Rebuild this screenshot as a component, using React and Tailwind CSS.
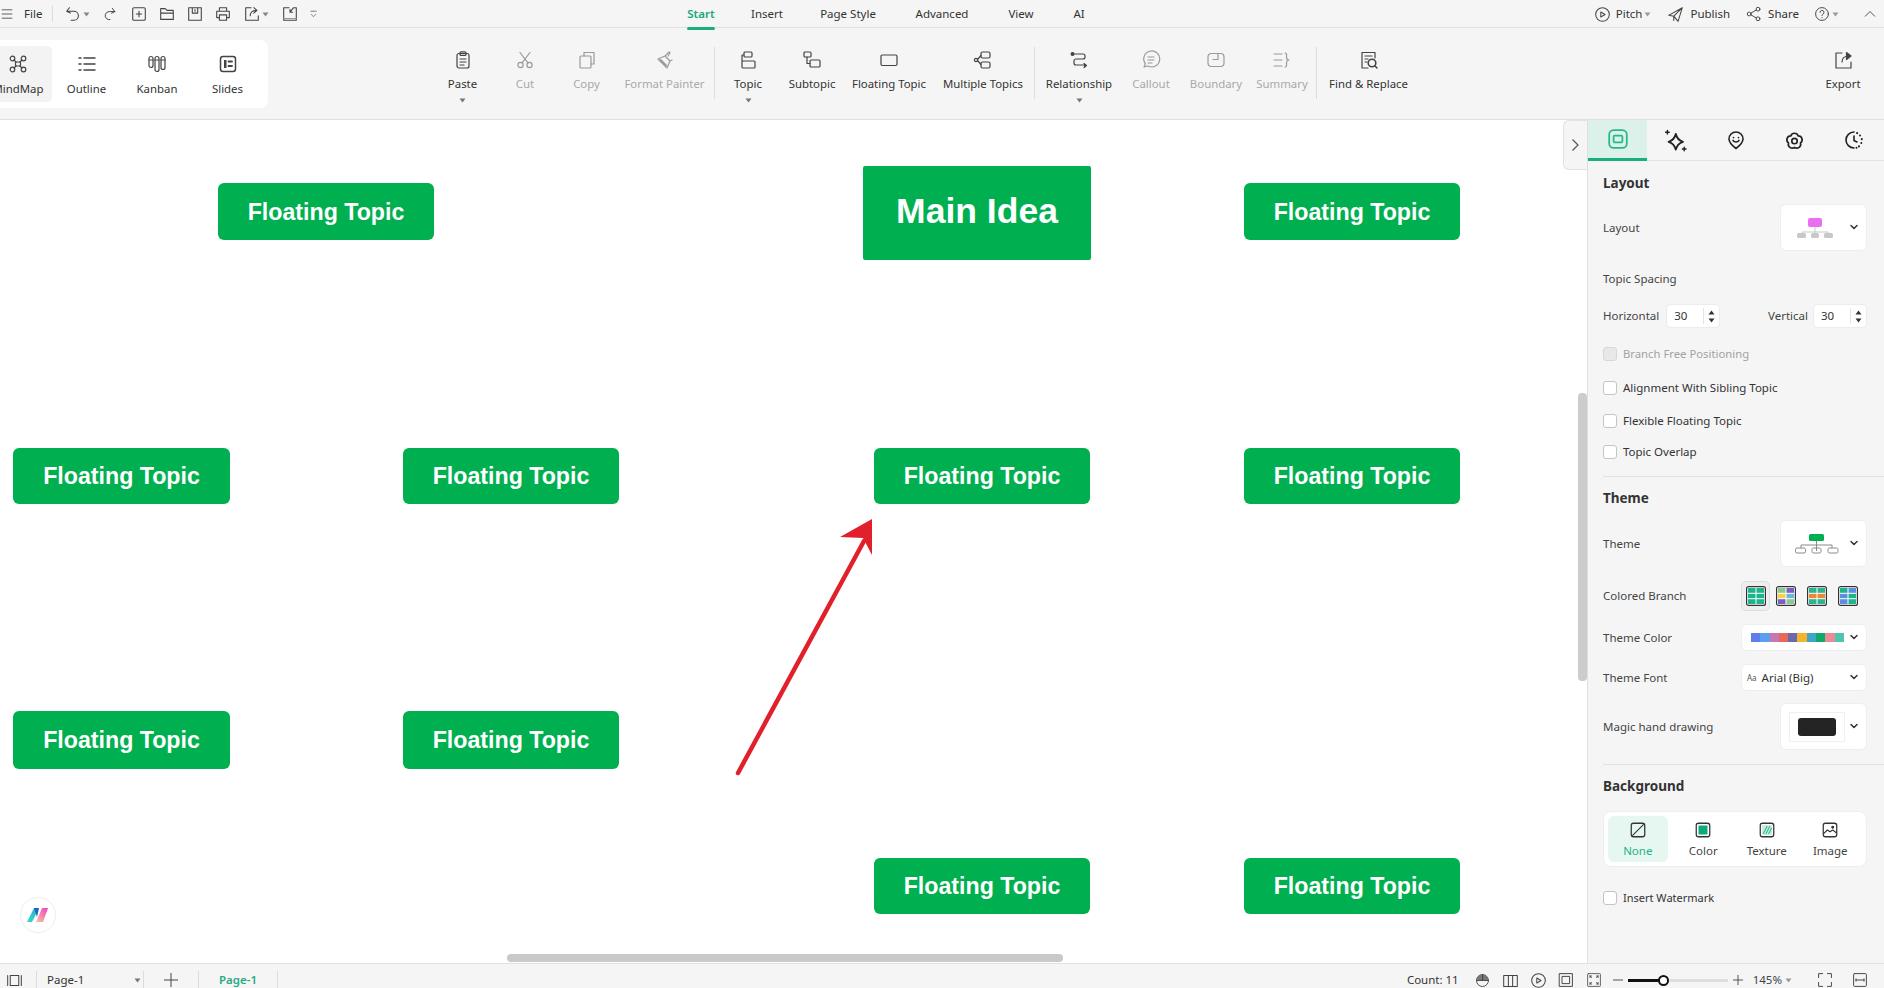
import React from "react";

const S = ({ w = 20, h, vb = "0 0 20 20", className = "", sw = 1.2, children }) => (
  <svg width={w} height={h || w} viewBox={vb} fill="none" stroke="currentColor" strokeWidth={sw} strokeLinecap="round" strokeLinejoin="round" className={className}>
    {children}
  </svg>
);

const Caret = ({ className = "" }) => (
  <svg width="7" height="5" viewBox="0 0 7 5" className={className}>
    <path d="M0.5 0.5h6L3.5 4.5z" fill="currentColor" />
  </svg>
);

const Chevron = () => (
  <svg width="10" height="7" viewBox="0 0 10 7" fill="none" stroke="#333" strokeWidth="1.5" strokeLinecap="round" strokeLinejoin="round">
    <path d="M2 1.5L5 4.5L8 1.5" />
  </svg>
);

// top bar icons
const IconMenu = () => <S w={14}><path d="M3 4h14M3 10h14M3 16h14" /></S>;
const IconUndo = () => <S w={18}><path d="M6 3L3 7l4 2M3 7h8a5 5 0 0 1 0 10H8" /></S>;
const IconRedo = () => <S w={16}><path d="M13 3l3 4-4 2M16 7H9a5 5 0 0 0-3 9 5 5 0 0 0 4 1" /></S>;
const IconNew = () => <S w={18}><rect x="3" y="3" width="14" height="14" rx="1.5" /><path d="M10 7v6M7 10h6" /></S>;
const IconOpen = () => <S w={18}><path d="M3 16V4h5l2 2h7v10zM3 9h14" /></S>;
const IconSave = () => <S w={18}><path d="M3 3h14v14H3zM7 3v6h6V3M10 5v2" /></S>;
const IconPrint = () => <S w={18}><path d="M6 7V3h8v4M5 14H3V7h14v7h-2M6 11h8v6H6z" /></S>;
const IconExport = () => <S w={18}><path d="M9 3H3v14h14v-5M8 12c0-4 3-6 7-6M12 3l3.5 3L12 9" /></S>;
const IconCheckin = () => <S w={18}><path d="M9 3H3v14h14V3h-2M14 3l-4 5M10 5v3h3" /><path d="M3 15h14" stroke="#999" /></S>;
const IconMore = () => <S w={11}><path d="M5 4h10M6 10l4 4 4-4" /></S>;
const IconPitch = () => <S w={17}><circle cx="10" cy="10" r="8" /><path d="M8 7l5 3-5 3z" /></S>;
const IconPublish = () => <S w={17}><path d="M18 2L2 11l6 1zM18 2L13 18l-5-6M18 2L8 12v5" /></S>;
const IconShare = () => <S w={16}><circle cx="4" cy="10" r="2.4" /><circle cx="15" cy="4" r="2.4" /><circle cx="15" cy="16" r="2.4" /><path d="M6 9l7-4M6 11l7 4" /></S>;
const IconHelp = () => (
  <S w={16}>
    <circle cx="10" cy="10" r="8" />
    <path d="M7.5 8a2.5 2.5 0 1 1 3.5 2.3c-.7.3-1 .8-1 1.7M10 14.5v.2" />
  </S>
);

// view switch icons
const IconMind = () => (
  <S w={20}>
    <circle cx="4.5" cy="4.5" r="2.3" /><circle cx="15.5" cy="4.5" r="2.3" /><circle cx="4.5" cy="15.5" r="2.3" /><circle cx="15.5" cy="15.5" r="2.3" />
    <rect x="7.5" y="8" width="5" height="4" rx="1" /><path d="M6 6l2 2M14 6l-2 2M6 14l2-2M14 14l-2-2" />
  </S>
);
const IconOutline = () => <S w={20} sw={1.5}><path d="M2 4h2M7 4h11M2 10h2M7 10h11M2 16h2M7 16h11" /></S>;
const IconKanban = () => (
  <S w={20}>
    <rect x="2" y="2.5" width="4" height="11" rx="2" /><rect x="8" y="2.5" width="4" height="15" rx="2" /><rect x="14" y="2.5" width="4" height="13" rx="2" />
    <path d="M2 6h4M8 6h4M14 6h4" />
  </S>
);
const IconSlides = () => (
  <S w={20}>
    <rect x="2.5" y="2.5" width="15" height="15" rx="2.5" strokeWidth="1.5" />
    <rect x="6" y="6" width="2.5" height="8" fill="currentColor" stroke="none" />
    <path d="M10.5 7.5h3.5M10.5 12h3.5" strokeWidth="1.8" />
  </S>
);

// ribbon icons
const IconPaste = () => <S w={20}><rect x="4" y="3.5" width="12" height="14.5" rx="2" /><rect x="7" y="1.8" width="6" height="3.6" rx="1" /><path d="M7 9h6M7 12h6M7 15h4" /></S>;
const IconCut = () => <S w={20}><circle cx="5.5" cy="15" r="2.6" /><circle cx="14.5" cy="15" r="2.6" /><path d="M7 12.8L15 2.5M13 12.8L5 2.5" /></S>;
const IconCopy = () => <S w={20}><rect x="3" y="6" width="11" height="12" rx="1" /><path d="M7 6V2.5h10V14h-3" /></S>;
const IconPainter = () => <S w={20}><path d="M3 9l7-3 5 5-3 7zM10 6l4-4 1 1-2 3M15 11l2-1" /><path d="M6 9l6 6-1 2-7-7z" fill="currentColor" stroke="none" /></S>;
const IconTopic = () => <S w={20}><rect x="6" y="2" width="8" height="5" rx="1" /><rect x="4" y="11" width="13" height="7" rx="1" /><path d="M4 11V5h2" /></S>;
const IconSubtopic = () => <S w={20}><rect x="2" y="2" width="7" height="5" rx="1" /><rect x="8" y="10" width="10" height="7" rx="1" /><path d="M5 7v6.5h3" /></S>;
const IconFloating = () => <S w={20}><rect x="2" y="5" width="16" height="10.5" rx="1.2" /></S>;
const IconMultiple = () => <S w={20}><rect x="8" y="2" width="9" height="6" rx="1.5" /><rect x="8" y="12" width="9" height="6" rx="1.5" /><circle cx="3" cy="10" r="1.6" /><path d="M4.5 9.5L8 5.5M4.5 10.5L8 14.5" /></S>;
const IconRelation = () => <S w={20}><path d="M4 4h10a2 2 0 0 1 2 2v1a2 2 0 0 1-2 2H7a2 2 0 0 0-2 2v2a2 2 0 0 0 2 2h9" /><circle cx="3.5" cy="4" r="1.4" fill="currentColor" /><path d="M15 13.5l2.5 2-2.5 2" fill="currentColor" /></S>;
const IconCallout = () => <S w={20}><path d="M3 17l1.4-3.2A8 8 0 1 1 7 16z" /><path d="M7 7h6M7 10h6M7 13h4" /></S>;
const IconBoundary = () => <S w={20}><rect x="2" y="3.5" width="16" height="13" rx="3.5" /><path d="M7 9.5h5V3.5" /></S>;
const IconSummary = () => <S w={20}><path d="M2 4h8M2 10h8M2 16h8M13 3c2 0 1.5 2 1.5 4s1 3 2.5 3c-1.5 0-2.5 1-2.5 3s.5 4-1.5 4" /></S>;
const IconFind = () => <S w={20}><path d="M16 8V2.5H3V18h6" /><path d="M6 6h7M6 9h3M6 12h2" /><circle cx="13" cy="13" r="3.8" strokeWidth="1.6" /><path d="M16 16l2 2" strokeWidth="1.6" /></S>;
const IconExp = () => <S w={20}><path d="M9 3H3v15h15v-6" /><path d="M9 12c0-3.5 2-6 7-6" /><path d="M13.5 2.5L18 6l-4.5 3.5z" fill="currentColor" /></S>;

// panel tab icons
const TabLayout = () => (
  <S w={22} sw={1.6}>
    <rect x="2" y="2" width="16" height="16" rx="4" />
    <rect x="6" y="7" width="8" height="6" rx="1" />
  </S>
);
const TabStyle = () => (
  <S w={24} sw={1.6} vb="2 0 20 20">
    <path d="M11 5c1 4 2.500 5.500 6 6.500-3.500 1-5 2.500-6 6.500-1-4-2.500-5.500-6-6.500 3.500-1 5-2.500 6-6.500z" />
    <path d="M4 2v3M2.500 3.500h3M18 16v3M16.500 17.500h3" strokeWidth="1.200" />
  </S>
);
const TabMark = () => (
  <S w={20} sw={1.6}>
    <path d="M10 18.500C6 15.500 3 13 3 9a7 7 0 0 1 14 0c0 4-3 6.500-7 9.500z" />
    <path d="M7 10.500c1.500 2 4.500 2 6 0M7.500 7.500v.2M12.500 7.500v.2" />
  </S>
);
const TabFlower = () => (
  <S w={21} sw={1.6}>
    <path d="M6.470 5.640A3.700 3.700 0 0 1 13.500 5.640A3.700 3.700 0 0 1 15.700 12.350A3.700 3.700 0 0 1 10 16.500A3.700 3.700 0 0 1 4.300 12.350A3.700 3.700 0 0 1 6.470 5.640z" />
    <circle cx="10" cy="10.500" r="2.600" />
  </S>
);
const TabClock = () => (
  <S w={20} sw={1.6}>
    <path d="M10 2a8 8 0 1 0 0 16" />
    <path d="M13 3l.2.1M16 5.500v.1M17.800 9v.2M17.300 13v.1M15 16.300v.1M12.500 17.700v.1" strokeWidth="2" />
    <path d="M10 6v4.500l3 1.500" />
  </S>
);

// status bar icons
const IconPages = () => <S w={17}><path d="M2 4v12M18 4v12" /><rect x="5" y="4" width="10" height="12" /></S>;
const IconPie = () => <S w={15}><circle cx="10" cy="10" r="8" /><path d="M2 10a8 8 0 0 1 8-8v8zM10 2a8 8 0 0 1 8 8h-8z" fill="#777" stroke="none" /><path d="M2 10h16M10 2v8" /></S>;
const IconBook = () => <S w={17}><path d="M2 4h16v13H2zM7.500 4v13M12.500 4v13" /></S>;
const IconFit = () => <S w={16}><rect x="2" y="2" width="16" height="16" /><rect x="5.500" y="5.500" width="9" height="9" /></S>;
const IconExpand = () => <S w={16} sw={1}><rect x="2" y="2" width="16" height="16" rx="1" /><path d="M5 5l2 2M15 5l-2 2M5 15l2-2M15 15l-2-2M5 5h2M5 5v2M15 5h-2M15 5v2M5 15h2M5 15v-2M15 15h-2M15 15v-2" /></S>;
const IconFull = () => <S w={16}><path d="M2 7V2h5M13 2h5v5M2 13v5h5M18 13v5h-5" /></S>;
const IconWidth = () => <S w={16}><rect x="2" y="2" width="16" height="16" rx="1" /><path d="M5 10h10M5 8.500v3M15 8.500v3" /></S>;

const Sep = ({ className = "ml-[2px] mr-px" }) => <div className={`w-px h-[52px] mt-[19px] bg-[#dcdcdc] ${className}`} />;

const Tool = ({ label, icon, width, caret, off }) => (
  <div className={`${width} flex flex-col items-center pt-[22px] ${off ? "text-[#a9a9a9]" : "text-[#333]"}`}>
    <div className={`h-5 ${off ? "text-[#9a9a9a]" : "text-[#444]"}`}>{icon}</div>
    <span className="mt-[6px] h-4 leading-4 text-[11.4px] whitespace-nowrap">{label}</span>
    {caret && <Caret className="mt-[6px] text-[#777]" />}
  </div>
);

const View = ({ label, icon, width, active }) => (
  <div className={`${width} flex flex-col items-center pt-[8px] rounded-[5px] ${active ? "bg-[#f3f3f3]" : ""}`}>
    <div className="h-5 text-[#444]">{icon}</div>
    <span className="mt-[7px] h-4 leading-4 text-[11.4px] text-[#333] whitespace-nowrap">{label}</span>
  </div>
);

const Check = ({ label, off, size = "text-[11.5px]" }) => (
  <div className="flex items-center gap-[6px] h-4">
    <span className={`w-[14px] h-[14px] rounded-[3px] border ${off ? "bg-[#e8e8e8] border-[#d8d8d8]" : "bg-white border-[#c4c4c4]"}`} />
    <span className={`${size} ${off ? "text-[#a3a3a3]" : "text-[#333]"}`}>{label}</span>
  </div>
);

const Spin = () => (
  <div className="w-[54px] h-6 bg-white rounded-[5px] border border-[#ececec] flex items-center pl-[7px]">
    <span className="flex-1 text-[11.5px] text-[#333]">30</span>
    <div className="w-px h-4 bg-[#e4e4e4]" />
    <div className="w-[15px] flex flex-col items-center gap-[3px] text-[#333]">
      <Caret className="rotate-180" />
      <Caret />
    </div>
  </div>
);

const BigSelect = ({ pad, children }) => (
  <div className={`w-[87px] h-[47px] bg-white rounded-[6px] border border-[#eeeeee] flex items-center ${pad} pr-[7px] justify-between`}>
    {children}
    <Chevron />
  </div>
);

const WideSelect = ({ children }) => (
  <div className="w-[126px] h-[27px] bg-white rounded-[6px] border border-[#eeeeee] flex items-center pl-[5px] pr-[7px] justify-between">
    {children}
    <Chevron />
  </div>
);

const Label = ({ children }) => <span className="text-[11.5px] text-[#444]">{children}</span>;
const Heading = ({ children, className = "" }) => <div className={`h-5 leading-5 text-[13.5px] font-bold text-[#333] ${className}`}>{children}</div>;

const Branch = ({ a, b, c, d }) => (
  <svg width="20" height="20" viewBox="0 0 20 20">
    <rect x="0.6" y="0.6" width="18.800" height="18.800" rx="2" fill="#fff" stroke="#333" strokeWidth="1.2" />
    <rect x="2" y="2" width="7.500" height="4.800" fill={a} />
    <rect x="10.500" y="2" width="7.500" height="4.800" fill={b} />
    <rect x="2" y="7.800" width="7.500" height="4.400" fill={c} />
    <rect x="10.500" y="7.800" width="7.500" height="4.400" fill={d} />
    <rect x="2" y="13.200" width="7.500" height="4.800" fill={b} />
    <rect x="10.500" y="13.200" width="7.500" height="4.800" fill={a} />
  </svg>
);

const swatches = ["#5f7fe8", "#5c9df0", "#c578b4", "#e8685c", "#6a69ad", "#f4b32c", "#3fa5c8", "#0fa968", "#ee8a96", "#52c2b2"];

const topics = [
  "left-[218px] top-[63px] h-[57px] w-[216px]",
  "left-[1244px] top-[63px] h-[57px] w-[216px]",
  "left-[13px] top-[328px] h-[56px] w-[217px]",
  "left-[403px] top-[328px] h-[56px] w-[216px]",
  "left-[874px] top-[328px] h-[56px] w-[216px]",
  "left-[1244px] top-[328px] h-[56px] w-[216px]",
  "left-[13px] top-[591px] h-[58px] w-[217px]",
  "left-[403px] top-[591px] h-[58px] w-[216px]",
  "left-[874px] top-[738px] h-[56px] w-[216px]",
  "left-[1244px] top-[738px] h-[56px] w-[216px]",
];

const Canvas = () => (
  <div className="relative flex-1 bg-white overflow-hidden">
    <div className="absolute left-[863px] top-[46px] w-[228px] h-[94px] pb-[2px] bg-[#00b050] rounded-[2px] flex items-center justify-center font-['Liberation_Sans',sans-serif] font-bold text-[35.500px] text-white">
      Main Idea
    </div>
    {topics.map((pos) => (
      <div key={pos} className={`absolute ${pos} pt-px bg-[#00b050] rounded-[6px] flex items-center justify-center font-['Liberation_Sans',sans-serif] font-bold text-[23.200px] text-white`}>
        Floating Topic
      </div>
    ))}
    {/* arrow */}
    <svg width="160" height="270" viewBox="0 0 160 270" className="absolute left-[720px] top-[390px]">
      <path d="M18 263L144 31" stroke="#e2202c" strokeWidth="4.500" strokeLinecap="round" fill="none" />
      <path d="M152 9L120 27L143 28L152 45z" fill="#e2202c" />
    </svg>
    {/* collapse tab */}
    <div className="absolute right-0 top-0 w-6 h-[50px] bg-[#f5f5f5] border border-r-0 border-[#e2e2e2] rounded-l-[6px] flex items-center justify-center">
      <svg width="9" height="14" viewBox="0 0 9 14" fill="none" stroke="#555" strokeWidth="1.2"><path d="M1.500 1.500L7 7l-5.500 5.500" /></svg>
    </div>
    {/* scrollbars */}
    <div className="absolute right-0 top-[273px] w-[9px] h-[288px] bg-[#cccccc] rounded-[4px]" />
    <div className="absolute left-[507px] bottom-[1px] w-[556px] h-[8px] bg-[#c9c9c9] rounded-[4px]" />
    {/* assistant logo */}
    <div className="absolute left-[20px] top-[777px] w-9 h-9 rounded-full bg-white border border-[#ececec] flex items-center justify-center">
      <svg width="22" height="18" viewBox="0 0 22 18">
        <defs>
          <linearGradient id="lg1" x1="0" y1="1" x2="1" y2="0">
            <stop offset="0" stopColor="#2fe0c4" />
            <stop offset="1" stopColor="#2aa8d8" />
          </linearGradient>
          <linearGradient id="lg2" x1="0" y1="1" x2="1" y2="0">
            <stop offset="0" stopColor="#f4c7a0" />
            <stop offset="1" stopColor="#ee3fc0" />
          </linearGradient>
        </defs>
        <path d="M0 16L7 2h5L5 16z" fill="url(#lg1)" />
        <path d="M9 16l6-14h6l-5 14z" fill="url(#lg2)" />
        <path d="M7 2h5l-2 9z" fill="#2360c4" />
      </svg>
    </div>
  </div>
);

const Panel = () => (
  <aside className="w-[297px] shrink-0 bg-[#f5f5f5] border-l border-[#e0e0e0] flex flex-col overflow-hidden">
    <div className="h-[41px] flex border-b border-[#e2e2e2] text-[#222]">
      <div className="w-[59px] h-[41px] bg-[#dcf1ea] border-b-[3px] border-[#1aae7f] flex items-center justify-center text-[#25b98a]">
        <TabLayout />
      </div>
      <div className="w-[59px] flex items-center justify-center"><TabStyle /></div>
      <div className="w-[59px] flex items-center justify-center"><TabMark /></div>
      <div className="w-[59px] flex items-center justify-center"><TabFlower /></div>
      <div className="w-[59px] flex items-center justify-center"><TabClock /></div>
    </div>

    <div className="pl-[15px] pr-[17px]">
      <Heading className="mt-[12px]">Layout</Heading>
      <div className="mt-[11px] flex items-center justify-between">
        <Label>Layout</Label>
        <BigSelect pad="pl-[16px]">
          <svg width="36" height="22" viewBox="0 0 36 22">
            <rect x="11" y="1" width="14" height="9" rx="2" fill="#ea6ff0" />
            <path d="M18 10v8M5 18v-3h26v3" stroke="#c9c9c9" fill="none" />
            <rect x="0" y="16" width="9" height="5" rx="1.500" fill="#c8c8c8" />
            <rect x="14" y="16" width="8" height="5" rx="1.500" fill="#c8c8c8" />
            <rect x="27" y="16" width="9" height="5" rx="1.500" fill="#c8c8c8" />
          </svg>
        </BigSelect>
      </div>
      <div className="mt-[17px] h-[18px] leading-[18px]"><Label>Topic Spacing</Label></div>
      <div className="mt-[18px] flex items-center justify-between">
        <div className="flex items-center gap-[7px]"><Label>Horizontal</Label><Spin /></div>
        <div className="flex items-center gap-[5px]"><Label>Vertical</Label><Spin /></div>
      </div>
      <div className="mt-[18px]"><Check off label="Branch Free Positioning" size="text-[11.300px]" /></div>
      <div className="mt-[18px]"><Check label="Alignment With Sibling Topic" /></div>
      <div className="mt-[17px]"><Check label="Flexible Floating Topic" /></div>
      <div className="mt-[15px]"><Check label="Topic Overlap" /></div>
      <div className="mt-[16px] -mr-[17px] h-px bg-[#e0e0e0]" />

      <Heading className="mt-[11px]">Theme</Heading>
      <div className="mt-[12px] flex items-center justify-between">
        <Label>Theme</Label>
        <BigSelect pad="pl-[14px]">
          <svg width="44" height="20" viewBox="0 0 44 20" fill="none" stroke="#8a8a8a" strokeWidth="1">
            <rect x="14" y="0" width="15" height="7" rx="1.500" fill="#00b050" stroke="none" />
            <path d="M21.500 7v10M6 14v-3h31v3" />
            <rect x="0.500" y="14" width="10" height="5" rx="1.500" />
            <rect x="17" y="14" width="9" height="5" rx="1.500" />
            <rect x="33" y="14" width="10" height="5" rx="1.500" />
          </svg>
        </BigSelect>
      </div>
      <div className="mt-[14px] flex items-center justify-between h-[30px]">
        <Label>Colored Branch</Label>
        <div className="flex items-center w-[126px]">
          <div className="w-[29px] h-[30px] rounded-[5px] bg-[#eeeeee] border border-[#dddddd] flex items-center justify-center">
            <Branch a="#1db48c" b="#1db48c" c="#1db48c" d="#1db48c" />
          </div>
          <div className="ml-[6px]"><Branch a="#8cc98e" b="#7a5ec0" c="#f2d34c" d="#6fb4dc" /></div>
          <div className="ml-[11px]"><Branch a="#2cb58c" b="#2cb58c" c="#e8883a" d="#e8883a" /></div>
          <div className="ml-[11px]"><Branch a="#1db48c" b="#5c8fe0" c="#5c8fe0" d="#1db48c" /></div>
        </div>
      </div>
      <div className="mt-[13px] flex items-center justify-between">
        <Label>Theme Color</Label>
        <WideSelect>
          <div className="flex ml-[4px]">
            {swatches.map((c) => (
              <span key={c} className="w-[9.300px] h-[9px]" style={{ backgroundColor: c }} />
            ))}
          </div>
        </WideSelect>
      </div>
      <div className="mt-[13px] flex items-center justify-between">
        <Label>Theme Font</Label>
        <WideSelect>
          <div className="flex items-center gap-[5px]">
            <span className="text-[8px] text-[#555]">Aa</span>
            <span className="text-[11.5px] text-[#333]">Arial (Big)</span>
          </div>
        </WideSelect>
      </div>
      <div className="mt-[12px] flex items-center justify-between">
        <Label>Magic hand drawing</Label>
        <BigSelect pad="pl-[8px]">
          <div className="w-[56px] h-[30px] bg-white border border-[#f0f0f0] flex items-center justify-center">
            <span className="w-[38px] h-[18px] rounded-[3px] bg-[#242424]" />
          </div>
        </BigSelect>
      </div>
      <div className="mt-[14px] -mr-[17px] h-px bg-[#e0e0e0]" />

      <Heading className="mt-[11px]">Background</Heading>
      <div className="mt-[15px] h-[56px] bg-white rounded-[8px] border border-[#eeeeee] flex items-center px-[4px]">
        <div className="w-[61px] h-[46px] rounded-[6px] bg-[#e6f7f1] flex flex-col items-center pt-[5px] text-[#333]">
          <S w={18}><rect x="2.500" y="2.500" width="15" height="15" rx="2.500" strokeWidth="1.400" /><path d="M4 16L16 4" /></S>
          <span className="mt-[4px] text-[11.5px] leading-4 text-[#27b189]">None</span>
        </div>
        <div className="ml-[4px] w-[65px] h-[46px] flex flex-col items-center pt-[5px] text-[#333]">
          <S w={18}><rect x="2.500" y="2.500" width="15" height="15" rx="2.500" strokeWidth="1.400" /><rect x="5" y="5" width="10" height="10" fill="#0caa7a" stroke="none" /></S>
          <span className="mt-[4px] text-[11.5px] leading-4 text-[#444]">Color</span>
        </div>
        <div className="w-[65px] h-[46px] flex flex-col items-center pt-[5px] text-[#333]">
          <S w={18}><rect x="2.500" y="2.500" width="15" height="15" rx="2.500" strokeWidth="1.400" /><rect x="4.500" y="4.500" width="11" height="11" fill="#c9eedf" stroke="none" /><path d="M6 14l4-8M9 14l4-8M12 14l3-6" stroke="#2fb98c" /></S>
          <span className="mt-[4px] text-[11.5px] leading-4 text-[#444]">Texture</span>
        </div>
        <div className="w-[65px] h-[46px] flex flex-col items-center pt-[5px] text-[#333]">
          <S w={18}><rect x="2.500" y="2.500" width="15" height="15" rx="2.500" strokeWidth="1.400" /><path d="M3 14l4-4 3 2 3-2 4 3" /><circle cx="13" cy="7" r="1" fill="currentColor" /></S>
          <span className="mt-[4px] text-[11.5px] leading-4 text-[#444]">Image</span>
        </div>
      </div>
      <div className="mt-[23px]"><Check label="Insert Watermark" size="text-[11px]" /></div>
    </div>
  </aside>
);

export default function App() {
  return (
    <div className="w-[1884px] h-[988px] overflow-hidden flex flex-col bg-white font-['Noto_Sans',sans-serif] text-[#333]">
      {/* title bar */}
      <header className="h-[28px] shrink-0 pt-px bg-[#f5f5f5] border-b border-[#e0e0e0] flex items-center text-[11.5px] text-[#444]">
        <div className="w-[668px] shrink-0 flex items-center">
          <div className="w-[14px]"><IconMenu /></div>
          <span className="ml-[10px] text-[#333]">File</span>
          <div className="ml-[10px] w-px h-4 bg-[#dcdcdc]" />
          <div className="ml-[11px] flex items-center gap-[1px]"><IconUndo /><Caret className="text-[#888]" /></div>
          <div className="ml-[12px]"><IconRedo /></div>
          <div className="ml-[12px]"><IconNew /></div>
          <div className="ml-[10px]"><IconOpen /></div>
          <div className="ml-[10px]"><IconSave /></div>
          <div className="ml-[10px]"><IconPrint /></div>
          <div className="ml-[11px] flex items-center gap-[1px]"><IconExport /><Caret className="text-[#888]" /></div>
          <div className="ml-[12px]"><IconCheckin /></div>
          <div className="ml-[9px]"><IconMore /></div>
        </div>
        <nav className="flex text-[#333]">
          <div className="relative w-[66px] text-center font-semibold text-[#1aa67c]">
            Start
            <div className="absolute left-[19px] -bottom-[7px] w-[28px] h-[3px] rounded-sm bg-[#1aae7f]" />
          </div>
          <div className="w-[66px] text-center">Insert</div>
          <div className="w-[96px] text-center">Page Style</div>
          <div className="w-[92px] text-center">Advanced</div>
          <div className="w-[66px] text-center">View</div>
          <div className="w-[50px] text-center">AI</div>
        </nav>
        <div className="ml-auto flex items-center pr-[8px]">
          <IconPitch />
          <span className="ml-[5px] text-[#333]">Pitch</span>
          <Caret className="ml-[2px] text-[#999]" />
          <div className="ml-[16px]"><IconPublish /></div>
          <span className="ml-[6px] text-[#333]">Publish</span>
          <div className="ml-[16px]"><IconShare /></div>
          <span className="ml-[6px] text-[#333]">Share</span>
          <div className="ml-[15px]"><IconHelp /></div>
          <Caret className="ml-[2px] text-[#999]" />
          <svg width="12" height="8" viewBox="0 0 12 8" fill="none" stroke="#555" strokeWidth="1" className="ml-[25px]"><path d="M1 6.500L6 1.500l5 5" /></svg>
        </div>
      </header>

      {/* ribbon */}
      <section className="h-[92px] shrink-0 bg-[#f5f5f5] border-b border-[#e0e0e0] flex">
        <div className="w-[268px] h-[68px] mt-[12px] shrink-0 bg-white rounded-r-[8px] flex pt-[6px]">
          <View active width="w-[68px] -ml-[16px] h-[56px]" label="MindMap" icon={<IconMind />} />
          <View width="w-[69px]" label="Outline" icon={<IconOutline />} />
          <View width="w-[72px]" label="Kanban" icon={<IconKanban />} />
          <View width="w-[69px]" label="Slides" icon={<IconSlides />} />
        </div>
        <div className="ml-[163px] flex">
          <Tool width="w-[63px]" label="Paste" caret icon={<IconPaste />} />
          <Tool off width="w-[62px]" label="Cut" icon={<IconCut />} />
          <Tool off width="w-[61px]" label="Copy" icon={<IconCopy />} />
          <Tool off width="w-[95px]" label="Format Painter" icon={<IconPainter />} />
          <Sep />
          <Tool width="w-[64px]" label="Topic" caret icon={<IconTopic />} />
          <Tool width="w-[64px]" label="Subtopic" icon={<IconSubtopic />} />
          <Tool width="w-[90px]" label="Floating Topic" icon={<IconFloating />} />
          <Tool width="w-[98px]" label="Multiple Topics" icon={<IconMultiple />} />
          <Sep />
          <Tool width="w-[86px]" label="Relationship" caret icon={<IconRelation />} />
          <Tool off width="w-[58px]" label="Callout" icon={<IconCallout />} />
          <Tool off width="w-[72px]" label="Boundary" icon={<IconBoundary />} />
          <Tool off width="w-[60px]" label="Summary" icon={<IconSummary />} />
          <Sep className="ml-[4px] mr-[2px]" />
          <Tool width="w-[99px]" label="Find & Replace" icon={<IconFind />} />
        </div>
        <div className="ml-auto mr-[17px]">
          <Tool width="w-[48px]" label="Export" icon={<IconExp />} />
        </div>
      </section>

      {/* main area */}
      <main className="flex-1 flex min-h-0">
        <Canvas />
        <Panel />
      </main>

      {/* status bar */}
      <footer className="h-[25px] shrink-0 bg-[#f5f5f5] border-t border-[#e0e0e0] flex items-center pt-[8px] text-[11.5px] text-[#333]">
        <div className="w-[36px] pl-[6px] text-[#444]"><IconPages /></div>
        <div className="w-px h-[18px] bg-[#dcdcdc]" />
        <div className="ml-[10px] w-[96px] flex items-center justify-between">
          <span>Page-1</span>
          <Caret className="mr-[2px] text-[#777]" />
        </div>
        <div className="w-px h-[18px] bg-[#dcdcdc]" />
        <div className="w-[54px] flex justify-center text-[#444]">
          <svg width="14" height="14" viewBox="0 0 14 14" stroke="currentColor"><path d="M7 0v14M0 7h14" /></svg>
        </div>
        <div className="w-px h-[18px] bg-[#dcdcdc]" />
        <div className="w-[78px] text-center font-semibold text-[#27a982]">Page-1</div>
        <div className="w-px h-[18px] bg-[#dcdcdc]" />

        <div className="ml-auto flex items-center pr-[16px] text-[#444]">
          <span className="text-[#333]">Count: 11</span>
          <div className="ml-[16px]"><IconPie /></div>
          <div className="ml-[12px]"><IconBook /></div>
          <div className="ml-[11px]"><IconPitch /></div>
          <div className="ml-[11px]"><IconFit /></div>
          <div className="ml-[12px]"><IconExpand /></div>
          <svg width="10" height="2" viewBox="0 0 10 2" className="ml-[11px]"><path d="M0 1h10" stroke="#555" /></svg>
          <div className="relative ml-[5px] w-[100px] h-[3px] bg-[#dedede]">
            <div className="w-[36px] h-[3px] bg-[#111]" />
            <div className="absolute left-[30px] -top-[4px] w-[11px] h-[11px] rounded-full bg-white border-2 border-[#111]" />
          </div>
          <svg width="10" height="10" viewBox="0 0 10 10" className="ml-[5px]"><path d="M5 0v10M0 5h10" stroke="#555" /></svg>
          <span className="ml-[10px]">145%</span>
          <Caret className="ml-[3px] text-[#999]" />
          <div className="ml-[25px]"><IconFull /></div>
          <div className="ml-[19px]"><IconWidth /></div>
        </div>
      </footer>
    </div>
  );
}
